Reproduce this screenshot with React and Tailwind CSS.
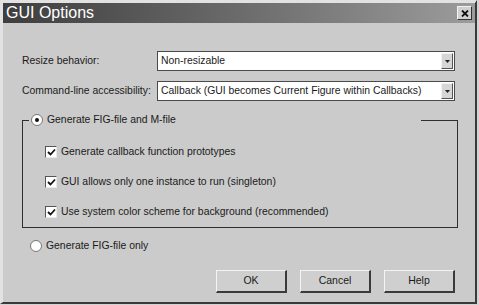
import React from 'react'

function Check() {
  return (
    <span className="w-[12px] h-[12px] bg-white border-t-[1px] border-l-[1px] border-[#555] border-r-[1px] border-r-[#e8e8e8] border-b-[1px] border-b-[#e8e8e8] flex items-center justify-center shrink-0">
      <svg width="9" height="9" viewBox="0 0 9 9">
        <path d="M1 4 L3.5 6.5 L8 1.5" stroke="#111" strokeWidth="1.8" fill="none" />
      </svg>
    </span>
  )
}

function Radio({ on }) {
  return (
    <span className="w-[12px] h-[12px] rounded-full bg-white border-[1px] border-[#777] flex items-center justify-center shrink-0">
      {on && <span className="w-[4px] h-[4px] rounded-full bg-[#111]" />}
    </span>
  )
}

function Dropdown({ value }) {
  return (
    <div className="w-[298px] h-[20px] bg-white border-[1px] border-[#4a4a4a] flex items-center">
      <span className="flex-1 pl-[3px] truncate">{value}</span>
      <span className="w-[12px] h-[16px] mr-[1px] bg-[#d6d6d6] border-t-[1px] border-l-[1px] border-[#f2f2f2] border-r-[1px] border-r-[#555] border-b-[1px] border-b-[#555] flex items-center justify-center">
        <svg width="5" height="3" viewBox="0 0 5 3"><path d="M0 0 H5 L2.5 3 Z" fill="#222" /></svg>
      </span>
    </div>
  )
}

function Btn({ children }) {
  return (
    <button className="w-[71px] h-[23px] bg-[#cfcfcf] border-t-[1px] border-l-[1px] border-[#f4f4f4] border-r-[2px] border-r-[#3a3a3a] border-b-[2px] border-b-[#3a3a3a] text-[10.5px] text-[#1a1a1a]">
      {children}
    </button>
  )
}

export default function App() {
  return (
    <div className="w-[479px] h-[305px] bg-[#d4d4d4] font-['Liberation_Sans',Arial,sans-serif] text-[10.4px] text-[#1a1a1a]">
      <div className="w-[477px] h-[304px] bg-[#cbcbcb] border-l-[3px] border-t-[3px] border-[#e2e2e2] border-r-[2px] border-r-[#3a3a3a] border-b-[2px] border-b-[#3a3a3a] flex flex-col">
        <div className="h-[20px] bg-gradient-to-r from-[#3e3e3e] to-[#9c9c9c] flex items-center justify-between pl-[3px] pr-[3px]">
          <span className="text-white text-[16px] leading-none">GUI Options</span>
          <span className="w-[15px] h-[14px] bg-[#d0d0d0] border-t-[1px] border-l-[1px] border-[#f2f2f2] border-r-[1px] border-r-[#333] border-b-[1px] border-b-[#333] flex items-center justify-center">
            <svg width="8" height="7" viewBox="0 0 8 7"><path d="M1 0.5 L7 6.5 M7 0.5 L1 6.5" stroke="#111" strokeWidth="1.8" /></svg>
          </span>
        </div>

        <div className="pl-[19px] pt-[28px] flex flex-col">
          <div className="flex items-center h-[20px]">
            <span className="w-[135px] whitespace-nowrap">Resize behavior:</span>
            <Dropdown value="Non-resizable" />
          </div>
          <div className="flex items-center h-[20px] mt-[10px]">
            <span className="w-[135px] whitespace-nowrap">Command-line accessibility:</span>
            <Dropdown value="Callback (GUI becomes Current Figure within Callbacks)" />
          </div>

          <fieldset className="w-[436px] mt-[12px] border-[1px] border-[#2e2e2e] pl-[22px] pb-[8px]">
            <legend className="w-[392px] h-[14px] ml-[-16px] pl-[2px] flex items-center gap-[4px]">
              <Radio on />
              <span>Generate FIG-file and M-file</span>
            </legend>
            <div className="flex flex-col gap-[16px] pt-[18px]">
              <div className="flex items-center gap-[4px] h-[14px]">
                <Check />
                <span>Generate callback function prototypes</span>
              </div>
              <div className="flex items-center gap-[4px] h-[14px]">
                <Check />
                <span>GUI allows only one instance to run (singleton)</span>
              </div>
              <div className="flex items-center gap-[4px] h-[14px]">
                <Check />
                <span>Use system color scheme for background (recommended)</span>
              </div>
            </div>
          </fieldset>

          <div className="flex items-center gap-[4px] h-[14px] mt-[11px] ml-[8px]">
            <Radio />
            <span>Generate FIG-file only</span>
          </div>

          <div className="flex justify-end gap-[13px] mt-[17px] pr-[20px]">
            <Btn>OK</Btn>
            <Btn>Cancel</Btn>
            <Btn>Help</Btn>
          </div>
        </div>
      </div>
    </div>
  )
}
